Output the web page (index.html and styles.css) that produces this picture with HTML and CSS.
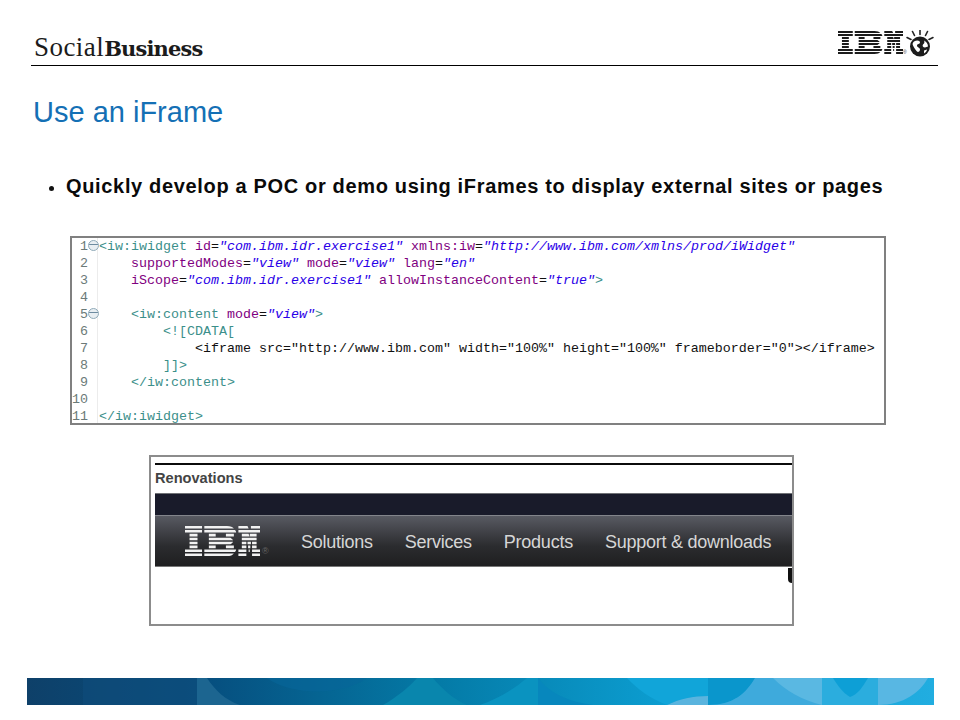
FILE: index.html
```html
<!DOCTYPE html>
<html lang="en">
<head>
<meta charset="utf-8">
<title>Use an iFrame</title>
<link rel="stylesheet" href="styles.css">
</head>
<body>
<div class="slide">
  <header class="head">
    <div class="brand"><span class="brand-light">Social</span><span class="brand-bold">Business</span></div>
    <div class="head-logo">
      <svg class="ibm-top" viewBox="0 0 66 23" preserveAspectRatio="none" aria-label="IBM">
        <use href="#ibm-mark" fill="#1c1c1c"/>
      </svg>
      <span class="reg-top">®</span>
      <svg class="globe" viewBox="0 0 28 28" aria-hidden="true">
        <g stroke="#222" stroke-width="1.6" stroke-linecap="round">
          <path d="M14 0v4.500M6.500 1.500l2 4M21.500 1.500l-2 4M1 7.500l4 2M27 7.500l-4 2"/>
        </g>
        <circle cx="14" cy="16.500" r="10" fill="#1c1c1c"/>
        <path d="M8 11.500c3-2 6-1 6 1s-3 1-3 3 3 2 3 4-2 3-3 2-3-4-4-6 0-3 1-4zM18 10.500c2 1 4 3 4 6l-3 1c-2 0-3-2-2-3s2-2 1-4zM18 20.500l3-1c0 2-2 3-3 4z" fill="#fff"/>
      </svg>
    </div>
  </header>

  <h1 class="title">Use an iFrame</h1>

  <ul class="points">
    <li>Quickly develop a POC or demo using iFrames to display external sites or pages</li>
  </ul>

  <div class="code-box">
    <div class="code-line"><span class="num">1</span><span class="fold"></span><span class="tag">&lt;iw:iwidget</span> <span class="attr">id</span>=<span class="val">"com.ibm.idr.exercise1"</span> <span class="attr">xmlns:iw</span>=<span class="val">"http://www.ibm.com/xmlns/prod/iWidget"</span></div>
    <div class="code-line"><span class="num">2</span><span class="nofold"></span>    <span class="attr">supportedModes</span>=<span class="val">"view"</span> <span class="attr">mode</span>=<span class="val">"view"</span> <span class="attr">lang</span>=<span class="val">"en"</span></div>
    <div class="code-line"><span class="num">3</span><span class="nofold"></span>    <span class="attr">iScope</span>=<span class="val">"com.ibm.idr.exercise1"</span> <span class="attr">allowInstanceContent</span>=<span class="val">"true"</span><span class="tag">&gt;</span></div>
    <div class="code-line"><span class="num">4</span><span class="nofold"></span></div>
    <div class="code-line"><span class="num">5</span><span class="fold"></span>    <span class="tag">&lt;iw:content</span> <span class="attr">mode</span>=<span class="val">"view"</span><span class="tag">&gt;</span></div>
    <div class="code-line"><span class="num">6</span><span class="nofold"></span>        <span class="tag">&lt;![CDATA[</span></div>
    <div class="code-line"><span class="num">7</span><span class="nofold"></span>            &lt;iframe src="http://www.ibm.com" width="100%" height="100%" frameborder="0"&gt;&lt;/iframe&gt;</div>
    <div class="code-line"><span class="num">8</span><span class="nofold"></span>        <span class="tag">]]&gt;</span></div>
    <div class="code-line"><span class="num">9</span><span class="nofold"></span>    <span class="tag">&lt;/iw:content&gt;</span></div>
    <div class="code-line"><span class="num">10</span><span class="nofold"></span></div>
    <div class="code-line"><span class="num">11</span><span class="nofold"></span><span class="tag">&lt;/iw:iwidget&gt;</span></div>
  </div>

  <div class="frame-box">
    <div class="frame-rule"></div>
    <div class="frame-title">Renovations</div>
    <div class="frame-top"></div>
    <nav class="frame-nav">
      <svg class="ibm-nav" viewBox="0 0 66 23" preserveAspectRatio="none" aria-label="IBM">
        <use href="#ibm-mark" fill="#f2f2f2"/>
      </svg>
      <span class="reg-nav">®</span>
      <span class="nav-item">Solutions</span>
      <span class="nav-item">Services</span>
      <span class="nav-item">Products</span>
      <span class="nav-item">Support &amp; downloads</span>
    </nav>
    <div class="frame-rest"><span class="frag"></span></div>
  </div>

  <footer class="band">
    <svg viewBox="0 0 907 27" preserveAspectRatio="none" aria-hidden="true">
      <defs>
        <linearGradient id="bandgrad" x1="0" x2="1" y1="0" y2="0">
          <stop offset="0" stop-color="#0e4069"/>
          <stop offset="0.2" stop-color="#064f7f"/>
          <stop offset="0.45" stop-color="#047aa6"/>
          <stop offset="0.7" stop-color="#0c9dd0"/>
          <stop offset="1" stop-color="#21ade0"/>
        </linearGradient>
      </defs>
      <rect width="907" height="27" fill="url(#bandgrad)"/>
      <path d="M56 0h114v27h-114z" fill="#0f4d7c" opacity=".6"/>
      <path d="M170 0h10c8 12 18 22 33 27h-43z" fill="#1c6590"/>
      <path d="M240 0c25 18 75 18 100 0z" fill="#06669a" opacity=".6"/>
      <path d="M356 27c14-8 26-18 34-27h16c10 12 22 22 34 27z" fill="#0986ad"/>
      <path d="M453 27c18-6 34-16 47-27h11v27z" fill="#0a93c0"/>
      <path d="M511 0c10 14 30 24 55 27h-55z" fill="#0787bd"/>
      <path d="M600 0h81v18c-15 0-29 3-41 9-16-6-30-16-40-27z" fill="#11a5d9"/>
      <path d="M640 27c12-6 26-9 41-9v9z" fill="#5ab4de"/>
      <path d="M681 0h47c-8 16-24 27-47 27z" fill="#0a96cc"/>
      <path d="M728 0h67v27h-114c26 0 38-12 47-27z" fill="#3eaadc"/>
      <path d="M746 0h49v27c-20-5-36-14-49-27z" fill="#5ab8e2"/>
      <path d="M795 0h56v27h-56z" fill="#2badde"/>
      <path d="M806 0h35c-6 10-10 16-18 19-7-4-12-11-17-19z" fill="#0d9fd6"/>
      <path d="M851 0h50c-8 14-24 27-50 27z" fill="#58b7e3"/>
    </svg>
  </footer>
</div>

<svg class="defs" aria-hidden="true">
  <defs>
    <g id="ibm-mark">
      <path d="M0 0h15v2h-15zM17 0h20c3 0 5 .7 6 2h-26zM47 0h8l1 2h-9zM58 0h8v2h-8z"/>
      <path d="M0 3h15v2h-15zM17 3h27c.7.600 1 1.300 1 2h-28zM47 3h10l.7 2h-10.700zM57 3h9v2h-8.300z"/>
      <path d="M4 6h7v2h-7zM21 6h6v2h-6zM36 6h7v2h-7zM50 6h6l.7 2h-6.700zM57 6h6v2h-6z"/>
      <path d="M4 9h7v2h-7zM21 9h19c1 .5 1.800 1.200 2.400 2h-21.400zM50 9h13v2h-13z"/>
      <path d="M4 12h7v2h-7zM21 12h21.400c-.6.800-1.400 1.500-2.400 2h-19zM50 12h4v2h-4zM55 12h3v2h-3zM59 12h4v2h-4z"/>
      <path d="M4 15h7v2h-7zM21 15h6v2h-6zM36 15h7v2h-7zM50 15h4v2h-4zM55.500 15h2v2h-2zM59 15h4v2h-4z"/>
      <path d="M0 18h15v2h-15zM17 18h28c0 .7-.3 1.400-1 2h-27zM47 18h7v2h-7zM56 18h1v2h-1zM59 18h7v2h-7z"/>
      <path d="M0 21h15v2h-15zM17 21h26c-1 1.300-3 2-6 2h-20zM47 21h7v2h-7zM59 21h7v2h-7z"/>
    </g>
  </defs>
</svg>
</body>
</html>
```

FILE: styles.css
```css
* { box-sizing: border-box; }
html, body { margin: 0; padding: 0; background: #fff; }
.slide {
  width: 960px;
  height: 720px;
  overflow: hidden;
  display: flex;
  flex-direction: column;
  font-family: "Liberation Sans", Arial, sans-serif;
  background: #fff;
}
.defs { width: 0; height: 0; display: block; }

.head {
  margin: 28px 22px 0 31px;
  height: 38px;
  border-bottom: 1px solid #000;
  display: flex;
  justify-content: space-between;
  align-items: flex-start;
  flex: none;
}
.brand {
  margin: 4px 0 0 3px;
  font-size: 27px;
  line-height: 30px;
  color: #1b1b1b;
  white-space: nowrap;
}
.brand-light { font-family: "Liberation Serif", serif; letter-spacing: 0.45px; }
.brand-bold { font-family: "DejaVu Serif", serif; font-weight: 700; font-size: 21px; letter-spacing: -0.85px; }
.head-logo { display: flex; align-items: flex-start; margin: 2px 4px 0 0; }
.ibm-top { width: 65px; height: 23px; display: block; margin-top: 1px; flex: none; }
.reg-top { width: 3px; margin-top: 20px; font-size: 5px; line-height: 5px; color: #444; flex: none; }
.globe { width: 28px; height: 28px; display: block; flex: none; }

.title {
  margin: 29px 0 0 33px;
  font-size: 29px;
  line-height: 34px;
  font-weight: 400;
  color: #1470b5;
  flex: none;
}

.points {
  list-style: none;
  margin: 45px 0 0 0;
  padding: 0 0 0 66px;
  flex: none;
}
.points li {
  position: relative;
  font-size: 20px;
  letter-spacing: 0.66px;
  line-height: 24px;
  font-weight: 700;
  color: #0a0a0a;
  white-space: nowrap;
}
.points li::before {
  content: "";
  position: absolute;
  left: -17px;
  top: 12px;
  width: 5px;
  height: 5px;
  border-radius: 50%;
  background: #111;
}

.code-box {
  margin: 38px 0 0 70px;
  width: 816px;
  height: 189px;
  border: 2px solid #808080;
  padding: 0;
  flex: none;
  font-family: "Liberation Mono", "Courier New", monospace;
  font-size: 13.330px;
  color: #111;
  background: linear-gradient(to right, #fff 25px, #ececec 25px, #ececec 26px, #fff 26px);
}
.code-line { height: 17px; line-height: 17px; white-space: pre; }
.num {
  display: inline-block;
  width: 16px;
  height: 17px;
  vertical-align: top;
  text-align: right;
  color: #6b7a78;
}
.fold, .nofold {
  display: inline-block;
  width: 11px;
  height: 17px;
  vertical-align: top;
  position: relative;
}
.fold::before {
  content: "";
  position: absolute;
  left: 0;
  top: 2px;
  width: 9px;
  height: 9px;
  border-radius: 50%;
  border: 1px solid #8ea9b8;
  background: linear-gradient(#e8eef2 0 3px, #6d8ba0 3px 4px, #e8eef2 4px);
}
.tag { color: #3b8f8a; }
.attr { color: #7f007f; }
.val { color: #2a00e8; font-style: italic; }

.frame-box {
  margin: 30px 0 0 149px;
  width: 645px;
  height: 171px;
  border: 2px solid #8c8c8c;
  padding: 6px 0 0 4px;
  flex: none;
  display: flex;
  flex-direction: column;
}
.frame-rule { height: 2px; background: #0b0b0b; flex: none; }
.frame-title {
  height: 28px;
  line-height: 26px;
  font-size: 14.600px;
  font-weight: 700;
  color: #444;
  flex: none;
}
.frame-top {
  height: 22px;
  background: #191b2a;
  border-top: 1px solid #6f7175;
  flex: none;
}
.frame-nav {
  height: 52px;
  display: flex;
  align-items: center;
  padding: 2px 0 0 30px;
  background: linear-gradient(#585a62, #2b2c2f 60%, #1f1f20);
  border-top: 1px solid #83858b;
  border-bottom: 1px solid #777;
  flex: none;
}
.ibm-nav { width: 75px; height: 30px; flex: none; margin-top: -2px; }
.reg-nav {
  width: 41px;
  padding: 18px 0 0 2px;
  font-size: 9px;
  color: #666;
  flex: none;
}
.nav-item {
  font-size: 18px;
  letter-spacing: -0.25px;
  color: #d6d6d6;
  margin-right: 32px;
  white-space: nowrap;
}
.frame-rest { flex: 1; position: relative; }
.frag {
  position: absolute;
  right: 0;
  top: 1px;
  width: 4px;
  height: 15px;
  background: #111;
  border-radius: 0 0 0 4px;
}

.band {
  margin: 52px 0 0 27px;
  width: 907px;
  height: 27px;
  flex: none;
}
.band svg { display: block; width: 100%; height: 100%; }
```
